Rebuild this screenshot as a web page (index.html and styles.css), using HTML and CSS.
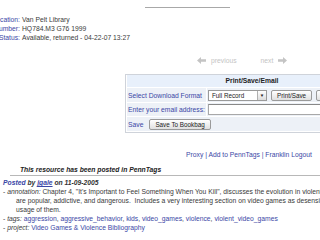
FILE: index.html
```html
<!DOCTYPE html>
<html lang="en">
<head>
    <meta charset="UTF-8">
    <title>Franklin Record - PennTags</title>
    <link rel="stylesheet" href="styles.css">
</head>
<body>
    <div class="topline"></div>

    <div class="info">
        <span class="lbl">Location:</span><span class="val">Van Pelt Library</span>
        <span class="lbl">Call Number:</span><span class="val">HQ784.M3 G76 1999</span>
        <span class="lbl">Status:</span><span class="val">Available, returned - 04-22-07 13:27</span>
    </div>

    <div class="pager">
        <span class="prev">
            <svg width="9" height="7" viewBox="0 0 9 7"><path d="M0 3.5 L4 0 L4 2.3 L9 2.3 L9 4.7 L4 4.7 L4 7 Z" fill="#c4c4c4"/></svg>
            previous
        </span>
        <span class="next">
            next
            <svg width="9" height="7" viewBox="0 0 9 7"><path d="M9 3.5 L5 0 L5 2.3 L0 2.3 L0 4.7 L5 4.7 L5 7 Z" fill="#c4c4c4"/></svg>
        </span>
    </div>

    <div class="box">
        <div class="box-head">Print/Save/Email</div>
        <div class="box-row">
            <div class="cell label">Select Download Format</div>
            <div class="cell grow">
                <span class="select">Full Record<span class="arrow">▼</span></span>
                <span class="btn">Print/Save</span>
                <span class="btn">Save as Text</span>
            </div>
        </div>
        <div class="box-row">
            <div class="cell label">Enter your email address:</div>
            <div class="cell grow"><span class="email"></span></div>
        </div>
        <div class="box-row">
            <div class="cell grow">Save <span class="btn bookbag">Save To Bookbag</span></div>
        </div>
    </div>

    <div class="links">
        <a href="#">Proxy</a> | <a href="#">Add to PennTags</a> | <a href="#">Franklin Logout</a>
    </div>

    <div class="posted-title">This resource has been posted in PennTags</div>

    <div class="entry">
        <div class="by"><a href="#">Posted</a> by <a href="#" class="user">jgale</a> on 11-09-2005</div>
        <div class="item">- <i>annotation:</i> Chapter 4, "It's Important to Feel Something When You Kill", discusses the evolution in violent video games and why they<br>are popular, addictive, and dangerous.&nbsp; Includes a very interesting section on video games as desensitization tools and the military's<br>usage of them.</div>
        <div class="item">- <i>tags:</i> <a href="#">aggression</a>, <a href="#">aggressive_behavior</a>, <a href="#">kids</a>, <a href="#">video_games</a>, <a href="#">violence</a>, <a href="#">violent_video_games</a></div>
        <div class="item">- <i>project:</i> <a href="#">Video Games &amp; Violence Bibliography</a></div>
    </div>
</body>
</html>
```

FILE: styles.css
```css
html, body {
    overflow: hidden;
}

body {
    margin: 0;
    width: 320px;
    height: 240px;
    background: #fff;
    color: #3a3a3a;
    font-family: "Liberation Sans", Arial, sans-serif;
    font-size: 6.75px;
    line-height: 9px;
}

a {
    color: #3b47a6;
    text-decoration: none;
}

.topline {
    margin: 7px 0 0 145px;
    width: 85px;
    border-top: 1px solid #a8a8a8;
}

.info {
    display: grid;
    grid-template-columns: 40px auto;
    column-gap: 2px;
    margin: 7px 0 0 -20px;
}

.lbl {
    text-align: right;
    color: #3b47a6;
}

.val {
    white-space: nowrap;
}

.pager {
    display: flex;
    gap: 24px;
    margin: 14px 0 0 197px;
    color: #c4c4c4;
}

.pager span {
    display: flex;
    align-items: center;
    gap: 5px;
}

.box {
    margin: 9px 0 0 125px;
    width: 250px;
    border: 1px solid #cfd3da;
    padding: 0 1px 1px;
}

.box-head {
    height: 12px;
    line-height: 12px;
    text-align: center;
    font-weight: bold;
    color: #222;
    background: #e8f0fb;
}

.box-row {
    display: flex;
    gap: 1px;
    margin-top: 1px;
}

.cell {
    display: flex;
    align-items: center;
    gap: 4px;
    padding: 0 1px;
    background: #edf1f7;
    white-space: nowrap;
}

.label {
    width: 77px;
    color: #3b47a6;
}

.grow {
    flex: 1;
    color: #3b47a6;
}

.box-row:nth-child(2) .cell {
    height: 14px;
}

.box-row:nth-child(3) .cell {
    height: 13px;
}

.box-row:nth-child(4) .cell {
    height: 14px;
    gap: 6px;
}

.select {
    display: flex;
    align-items: center;
    justify-content: space-between;
    width: 54px;
    height: 9px;
    padding-left: 3px;
    border: 1px solid #9a9a9a;
    background: #fff;
    color: #222;
    font-size: 6.3px;
}

.arrow {
    width: 8px;
    height: 9px;
    line-height: 9px;
    text-align: center;
    font-size: 4.5px;
    border-left: 1px solid #b0b0b0;
    background: linear-gradient(#fff, #dcdcdc);
}

.btn {
    display: inline-block;
    height: 9px;
    line-height: 9px;
    padding: 0 5px;
    border: 1px solid #9a9a9a;
    border-radius: 2px;
    background: linear-gradient(#ffffff, #e0e0e0);
    color: #222;
    font-size: 6.3px;
}

.email {
    display: block;
    width: 140px;
    height: 9px;
    border: 1px solid #a8a8a8;
    border-top-color: #888;
    background: #fff;
}

.links {
    margin: 17px 0 0 186px;
    white-space: nowrap;
    color: #3b47a6;
}

.posted-title {
    margin: 6px 0 0 10px;
    padding: 0 0 1px 10px;
    border-bottom: 1px solid #b8b8b8;
    font-weight: bold;
    font-style: italic;
    color: #222;
}

.entry {
    padding-left: 3px;
    white-space: nowrap;
}

.by {
    margin-top: 2px;
    font-weight: bold;
    font-style: italic;
    color: #333;
}

.user {
    text-decoration: underline;
}

.item {
    padding-left: 13px;
    text-indent: -13px;
}
```
